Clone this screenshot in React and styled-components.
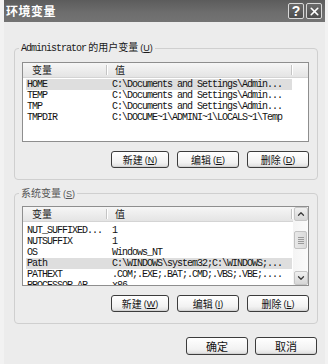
import React from 'react';
import styled, { createGlobalStyle } from 'styled-components';
import { X, ChevronUp, ChevronDown } from 'lucide-react';

const GlobalStyle = createGlobalStyle`
  html, body {
    margin: 0;
    padding: 0;
    background: #f2f2f2;
  }
  body {
    font-family: "Noto Sans CJK SC", "Liberation Sans", sans-serif;
    color: #222;
  }
`;

const Window = styled.div`
  margin-left: 4px;
  width: 321px;
  height: 364px;
  background: #ececec;
  display: flex;
  flex-direction: column;
`;

const TitleBar = styled.div`
  height: 22px;
  display: flex;
  align-items: center;
  justify-content: space-between;
  padding: 0 3px 0 2px;
  background: linear-gradient(#5c5c5c, #6e6e6e 60%, #737373);
`;

const Title = styled.span`
  color: #fff;
  font-size: 12px;
  font-weight: bold;
  letter-spacing: 0.5px;
  line-height: 22px;
`;

const TitleButtons = styled.div`
  display: flex;
  gap: 2px;
`;

const TitleButton = styled.div`
  width: 16px;
  height: 16px;
  box-sizing: border-box;
  border: 1px solid #d8d8d8;
  border-radius: 2px;
  background: linear-gradient(#6a6a6a, #4e4e4e);
  display: flex;
  align-items: center;
  justify-content: center;
  color: #fff;
  font-family: "Liberation Sans", sans-serif;
  font-weight: bold;
  font-size: 14px;
  line-height: 1;
`;

const Body = styled.div`
  padding: 0 7px 0 10px;
  display: flex;
  flex-direction: column;
`;

const Group = styled.fieldset`
  margin: ${p => p.$top}px 0 0 0;
  padding: ${p => p.$padTop}px 8px 11px 7px;
  border: 1px solid #cfcfcf;
  border-radius: 4px;
  min-width: 0;
`;

const Legend = styled.legend`
  margin-left: -3px;
  padding: 0 2px;
  font-size: 10px;
  line-height: 12px;
  color: ${p => p.$muted ? '#555' : '#1a1a1a'};
  white-space: nowrap;
`;

const Mono = styled.span`
  font-family: "Liberation Mono", monospace;
  font-size: 10px;
  letter-spacing: -1px;
`;

const Key = styled.span`
  font-family: "Liberation Sans", sans-serif;
  font-size: 9px;
  margin-left: 2px;

  u {
    text-decoration: underline;
  }
`;

const List = styled.div`
  height: ${p => p.$height}px;
  box-sizing: border-box;
  border: 1px solid #8e8e8e;
  background: #fff;
  display: flex;
  overflow: hidden;
`;

const ListMain = styled.div`
  flex: 1;
  min-width: 0;
  display: flex;
  flex-direction: column;
`;

const Header = styled.div`
  height: 15px;
  flex: none;
  display: flex;
  background: linear-gradient(#f6f6f6, #e4e4e4);
  border-bottom: 1px solid #d4d4d4;
  box-sizing: border-box;
`;

const HeaderCell = styled.div`
  width: ${p => p.$width ? `${p.$width}px` : 'auto'};
  flex: ${p => p.$width ? 'none' : '1'};
  box-sizing: border-box;
  padding-left: ${p => p.$pad}px;
  font-size: 10px;
  line-height: 14px;
  color: #222;
  position: relative;

  &::after {
    content: ${p => p.$sep ? "''" : 'none'};
    position: absolute;
    right: 0;
    top: 2px;
    bottom: 2px;
    width: 1px;
    background: #c4c4c4;
    box-shadow: 1px 0 0 #fff;
  }
`;

const Rows = styled.div`
  padding: ${p => p.$padTop}px 0 0 3px;
`;

const Row = styled.div`
  width: 266px;
  height: 11px;
  display: flex;
  align-items: center;
  background: ${p => p.$selected ? '#dedede' : 'transparent'};
  font-family: "Liberation Mono", monospace;
  font-size: 10px;
  letter-spacing: -1px;
  color: #111;
  white-space: nowrap;
`;

const Name = styled.span`
  width: 85px;
  flex: none;
  padding-left: 1px;
`;

const Value = styled.span`
  flex: 1;
`;

const Scrollbar = styled.div`
  width: 15px;
  flex: none;
  display: flex;
  flex-direction: column;
  align-items: center;
  background: linear-gradient(90deg, #f4f4f4, #fbfbfb);
`;

const ScrollButton = styled.div`
  width: 14px;
  height: 14px;
  box-sizing: border-box;
  border: 1px solid #c6c6c6;
  border-radius: 2px;
  background: linear-gradient(#f0f0f0, #d6d6d6);
  display: flex;
  align-items: center;
  justify-content: center;
  color: #3a3a3a;
`;

const Track = styled.div`
  flex: 1;
  width: 100%;
  display: flex;
  flex-direction: column;
  align-items: center;
  padding-top: 10px;
`;

const Thumb = styled.div`
  width: 13px;
  height: 18px;
  box-sizing: border-box;
  border: 1px solid #c2c2c2;
  border-radius: 2px;
  background: linear-gradient(90deg, #e8e8e8, #dadada);
  display: flex;
  flex-direction: column;
  align-items: center;
  justify-content: center;
  gap: 1px;
`;

const Grip = styled.div`
  width: 6px;
  height: 1px;
  background: #9a9a9a;
`;

const ButtonRow = styled.div`
  display: flex;
  justify-content: flex-end;
  gap: ${p => p.$gap}px;
  margin-top: ${p => p.$top}px;
  padding-right: ${p => p.$right || 0}px;
`;

const Button = styled.div`
  width: ${p => p.$width}px;
  height: ${p => p.$height}px;
  box-sizing: border-box;
  border: 1px solid #3c3c3c;
  border-radius: 3px;
  background: linear-gradient(#ffffff, #f2f2f2 70%, #dedede);
  box-shadow: inset 0 -1px 0 #d2d2d2;
  display: flex;
  align-items: center;
  justify-content: center;
  font-size: ${p => p.$size}px;
  color: #111;
  white-space: nowrap;
`;

const userVars = [
  { name: 'HOME', value: 'C:\\Documents and Settings\\Admin...', selected: true },
  { name: 'TEMP', value: 'C:\\Documents and Settings\\Admin...' },
  { name: 'TMP', value: 'C:\\Documents and Settings\\Admin...' },
  { name: 'TMPDIR', value: 'C:\\DOCUME~1\\ADMINI~1\\LOCALS~1\\Temp' },
];

const systemVars = [
  { name: 'NUT_SUFFIXED...', value: '1' },
  { name: 'NUTSUFFIX', value: '1' },
  { name: 'OS', value: 'Windows_NT' },
  { name: 'Path', value: 'C:\\WINDOWS\\system32;C:\\WINDOWS;...', selected: true },
  { name: 'PATHEXT', value: '.COM;.EXE;.BAT;.CMD;.VBS;.VBE;....' },
  { name: 'PROCESSOR_AR', value: 'x86' },
];

const Mnemonic = ({ k }) => (
  <Key>(<u>{k}</u>)</Key>
);

const VarList = ({ rows, height, padTop, scroll }) => (
  <List $height={height}>
    <ListMain>
      <Header>
        <HeaderCell $width={84} $pad={9} $sep>变量</HeaderCell>
        <HeaderCell $width={185} $pad={8} $sep>值</HeaderCell>
        <HeaderCell />
      </Header>
      <Rows $padTop={padTop}>
        {rows.map(r => (
          <Row key={r.name} $selected={r.selected}>
            <Name>{r.name}</Name>
            <Value>{r.value}</Value>
          </Row>
        ))}
      </Rows>
    </ListMain>
    {scroll && (
      <Scrollbar>
        <ScrollButton><ChevronUp size={10} strokeWidth={3} /></ScrollButton>
        <Track>
          <Thumb><Grip /><Grip /><Grip /><Grip /></Thumb>
        </Track>
        <ScrollButton><ChevronDown size={10} strokeWidth={3} /></ScrollButton>
      </Scrollbar>
    )}
  </List>
);

const ActionButtons = ({ keys }) => (
  <ButtonRow $gap={8} $top={9}>
    <Button $width={58} $height={17} $size={10}>新建<Mnemonic k={keys[0]} /></Button>
    <Button $width={62} $height={17} $size={10}>编辑<Mnemonic k={keys[1]} /></Button>
    <Button $width={62} $height={17} $size={10}>删除<Mnemonic k={keys[2]} /></Button>
  </ButtonRow>
);

export default function App() {
  return (
    <>
      <GlobalStyle />
      <Window>
        <TitleBar>
          <Title>环境变量</Title>
          <TitleButtons>
            <TitleButton>?</TitleButton>
            <TitleButton><X size={13} strokeWidth={3} /></TitleButton>
          </TitleButtons>
        </TitleBar>
        <Body>
          <Group $top={19} $padTop={7}>
            <Legend>
              <Mono>Administrator</Mono> 的用户变量<Mnemonic k="U" />
            </Legend>
            <VarList rows={userVars} height={80} padTop={1} />
            <ActionButtons keys={['N', 'E', 'D']} />
          </Group>
          <Group $top={7} $padTop={6}>
            <Legend $muted>系统变量<Mnemonic k="S" /></Legend>
            <VarList rows={systemVars} height={80} padTop={3} scroll />
            <ActionButtons keys={['W', 'I', 'L']} />
          </Group>
          <ButtonRow $gap={7} $top={13} $right={1}>
            <Button $width={62} $height={18} $size={11}>确定</Button>
            <Button $width={62} $height={18} $size={11}>取消</Button>
          </ButtonRow>
        </Body>
      </Window>
    </>
  );
}
